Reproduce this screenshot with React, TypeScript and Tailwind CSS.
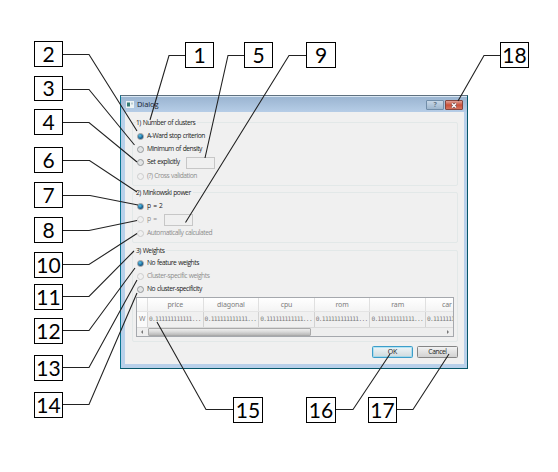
import type { ReactNode } from "react";

type Callout = { n: number; x: number; y: number; w?: number; h?: number; line: string };

const callouts: Callout[] = [
  { n: 1, x: 185, y: 42, line: "185,55.5 169,55.5 150,120" },
  { n: 2, x: 34, y: 41, line: "63,54.5 89,54.5 137,131" },
  { n: 3, x: 34, y: 76, h: 25, line: "63,89.5 89,89.5 134.5,145" },
  { n: 4, x: 34, y: 109, line: "63,122.5 89,122.5 137,162" },
  { n: 5, x: 244, y: 42, line: "244,55.5 228,55.5 205,158" },
  { n: 6, x: 34, y: 147, line: "63,160.5 89.5,160.5 137,192" },
  { n: 7, x: 34, y: 182, line: "63,195.5 90,195.5 138,205" },
  { n: 8, x: 34, y: 217, line: "63,230.5 89,230.5 137,220.5" },
  { n: 9, x: 306, y: 42, w: 30, line: "306,55.5 289,55.5 185.5,222.5" },
  { n: 10, x: 34, y: 252, line: "63,264.5 89,264.5 137,233.5" },
  { n: 11, x: 34, y: 284, line: "63,296.5 89,296.5 134,251" },
  { n: 12, x: 34, y: 318, line: "63,330.5 89,330.5 135,268" },
  { n: 13, x: 34, y: 355, line: "63,367.5 89,367.5 137,280" },
  { n: 14, x: 34, y: 392, line: "63,404.5 89,404.5 137,293" },
  { n: 15, x: 233, y: 397, w: 30, line: "233,409.5 206,409.5 157,322" },
  { n: 16, x: 306, y: 397, w: 30, line: "336,409.5 353,409.5 390,354" },
  { n: 17, x: 368, y: 397, line: "397,409.5 413,409.5 449,354" },
  { n: 18, x: 500, y: 42, line: "500,55.5 484,55.5 458,101" },
];

function Radio({ on, off, children }: { on?: boolean; off?: boolean; children: ReactNode }) {
  return (
    <label className={`flex h-[13px] items-center gap-[3px] whitespace-nowrap ${off ? "text-[#8e8e8e]" : "text-[#1c1c1c]"}`}>
      <span
        className={`flex size-[7px] shrink-0 items-center justify-center rounded-full border ${
          off ? "border-[#cccccc] bg-[#f0f0f0]" : "border-[#96999b] bg-[#e2e4e5]"
        }`}
      >
        {on && <span className="size-[4.5px] shrink-0 rounded-full bg-[radial-gradient(circle_at_40%_35%,#5cc8ee,#155c8c_60%,#173c58)]" />}
      </span>
      {children}
    </label>
  );
}

function Group({ title, className, children }: { title: string; className: string; children: ReactNode }) {
  return (
    <section className={`ml-[7px] w-[326px] rounded-[2px] border border-[#e2e8e8] pl-[3px] ${className}`}>
      <h2 className="-mt-[7px] h-[13px] w-fit bg-[#f0f0f0] pr-[2px] leading-[13px] whitespace-nowrap text-[#1c1c1c]">{title}</h2>
      {children}
    </section>
  );
}

const columns = ["price", "diagonal", "cpu", "rom", "ram", "car"];

function WeightTable() {
  return (
    <div className="mt-[1px] flex h-[40px] w-[318px] flex-col overflow-hidden border border-[#a5a8ad] bg-[#f0f0f0] text-[#7c7c7c]">
      <div className="flex h-[14px] shrink-0 border-b border-[#e4e4e4] bg-gradient-to-b from-white to-[#f4f4f4] font-['Noto_Sans',sans-serif] text-[7px] leading-[14px] tracking-[-0.1px]">
        <span className="w-[11px] shrink-0 border-r border-[#e0e0e0]" />
        {columns.map((c) => (
          <span key={c} className="w-[55.6px] shrink-0 border-r border-[#e0e0e0] text-center">
            {c === "car" ? <span className="block pl-[16px] text-left">{c}</span> : c}
          </span>
        ))}
      </div>
      <div className="flex h-[16px] shrink-0 border-b border-[#dadada] leading-[14px]">
        <span className="w-[11px] shrink-0 border-r border-[#d6d6d6] bg-[#fafafa] text-center text-[7px]">W</span>
        {columns.map((c) => (
          <span key={c} className="w-[55.6px] shrink-0 border-r border-[#d2d2d2] pl-[1px] font-['DejaVu_Sans_Mono',monospace] text-[6.2px] tracking-[-0.68px] whitespace-nowrap">
            0.111111111111...
          </span>
        ))}
      </div>
      <div className="flex h-[8px] shrink-0 items-center bg-[#eeeeee]">
        <svg className="w-[11px] shrink-0" height="8" viewBox="0 0 11 8"><path d="M6 2 4 4l2 2z" fill="#777" /></svg>
        <span className="h-[8px] w-[163px] rounded-[1px] border border-[#aaaaaa] bg-gradient-to-b from-[#eeeeee] via-[#d8d8d8] to-[#b9b9b9]" />
        <svg className="ml-auto w-[11px]" height="8" viewBox="0 0 11 8"><path d="M5 2l2 2-2 2z" fill="#777" /></svg>
      </div>
    </div>
  );
}

function Dialog() {
  return (
    <div className="flex h-[274px] w-[348px] flex-col border border-t-[#5f7180] border-r-[#075769] border-b-[#075769] border-l-[#087590] bg-[#b8d0ea] font-['Open_Sans','Noto_Sans',sans-serif] text-[6.7px] tracking-[-0.46px] [word-spacing:0.5px]">
      <header className="flex h-[16px] shrink-0 items-center border-t border-[#d9e7f4] bg-gradient-to-b from-[#9bb5d1] to-[#b6cde7] pr-[4px] pl-[5px]">
        <svg width="8" height="7" viewBox="0 0 8 7" className="shrink-0">
          <rect width="8" height="7" fill="#edf3f4" />
          <rect x="1" y="1.5" width="3" height="4" fill="#347c75" />
          <rect x="5.5" y="1.5" width="1" height="2" fill="#8aa7b0" />
        </svg>
        <span className="ml-[3px] pt-[1px] text-[7.5px] tracking-[-0.1px] text-[#172433]">Dialog</span>
        <div className="ml-auto flex gap-[1px] pt-[1px]">
          <span className="flex h-[10px] w-[18px] items-center justify-center rounded-[1px] border border-[#718da9] bg-gradient-to-b from-[#c7d7e7] to-[#9eb6ce] text-[7px] font-bold text-[#68798a]">?</span>
          <span className="flex h-[10px] w-[18px] items-center justify-center rounded-[1px] border border-[#86463f] bg-gradient-to-b from-[#dda096] via-[#ca4f39] to-[#d5735f]">
            <svg width="8" height="7" viewBox="0 0 8 7">
              <path d="M2 1.5 6 5.5M6 1.5 2 5.5" stroke="#6d4b50" strokeWidth="2.6" />
              <path d="M2 1.5 6 5.5M6 1.5 2 5.5" stroke="#fff" strokeWidth="1.5" />
            </svg>
          </span>
        </div>
      </header>
      <main className="ml-[4px] flex h-[252px] w-[339px] flex-col bg-[#f0f0f0] pt-[10px]">
        <Group title="1) Number of clusters" className="h-[64px]">
          <div className="flex flex-col pt-[1px] pl-[1px]">
            <Radio on>A-Ward stop criterion</Radio>
            <Radio>Minimum of density</Radio>
            <Radio>
              <span className="w-[36px]">Set explicitly</span>
              <span className="h-[12px] w-[29px] border border-[#c7c7c7]" />
            </Radio>
            <span className="h-px" />
            <Radio off>(?) Cross validation</Radio>
          </div>
        </Group>
        <Group title="2) Minkowski power" className="mt-[6px] h-[51px]">
          <div className="flex flex-col pt-[1px] pl-[1px]">
            <Radio on><span className="tracking-[-0.1px]">p = 2</span></Radio>
            <Radio off>
              <span className="w-[14px] tracking-[-0.1px]">p =</span>
              <span className="h-[12px] w-[29px] border border-[#c7c7c7]" />
            </Radio>
            <span className="h-px" />
            <Radio off>Automatically calculated</Radio>
          </div>
        </Group>
        <Group title="3) Weights" className="mt-[7px] h-[92px]">
          <div className="flex flex-col pl-[1px]">
            <Radio on>No feature weights</Radio>
            <Radio off>Cluster-specific weights</Radio>
            <Radio>No cluster-specificity</Radio>
          </div>
          <WeightTable />
        </Group>
        <div className="mt-[4px] flex justify-end gap-[4px] pr-[6px] text-[#222222]">
          <button className="h-[12px] w-[41px] rounded-[1.5px] border border-[#3c9dc9] bg-gradient-to-b from-[#eef5f8] to-[#cfdadd] text-[7px] leading-[10px] tracking-[-0.2px] shadow-[inset_0_0_0_0.5px_#7bd3f2]">OK</button>
          <button className="h-[12px] w-[41px] rounded-[1.5px] border border-[#858585] bg-gradient-to-b from-[#f2f2f2] to-[#d2d2d2] leading-[10px] tracking-[-0.4px]">Cancel</button>
        </div>
      </main>
    </div>
  );
}

export default function App() {
  return (
    <div className="relative h-[472px] w-[558px] overflow-hidden bg-white pt-[95px] pl-[120px]">
      <Dialog />
      <svg className="absolute inset-0" width="558" height="472" fill="none" stroke="#222" strokeWidth="1.1">
        {callouts.map((c) => (
          <polyline key={c.n} points={c.line} />
        ))}
      </svg>
      {callouts.map((c) => (
        <span
          key={c.n}
          className="absolute flex items-center justify-center border border-black bg-white pb-[2px] font-['Lato','Noto_Sans',sans-serif] text-[21px] leading-none text-black"
          style={{ left: c.x, top: c.y, width: c.w ?? 29, height: c.h ?? 26 }}
        >
          {c.n}
        </span>
      ))}
    </div>
  );
}
